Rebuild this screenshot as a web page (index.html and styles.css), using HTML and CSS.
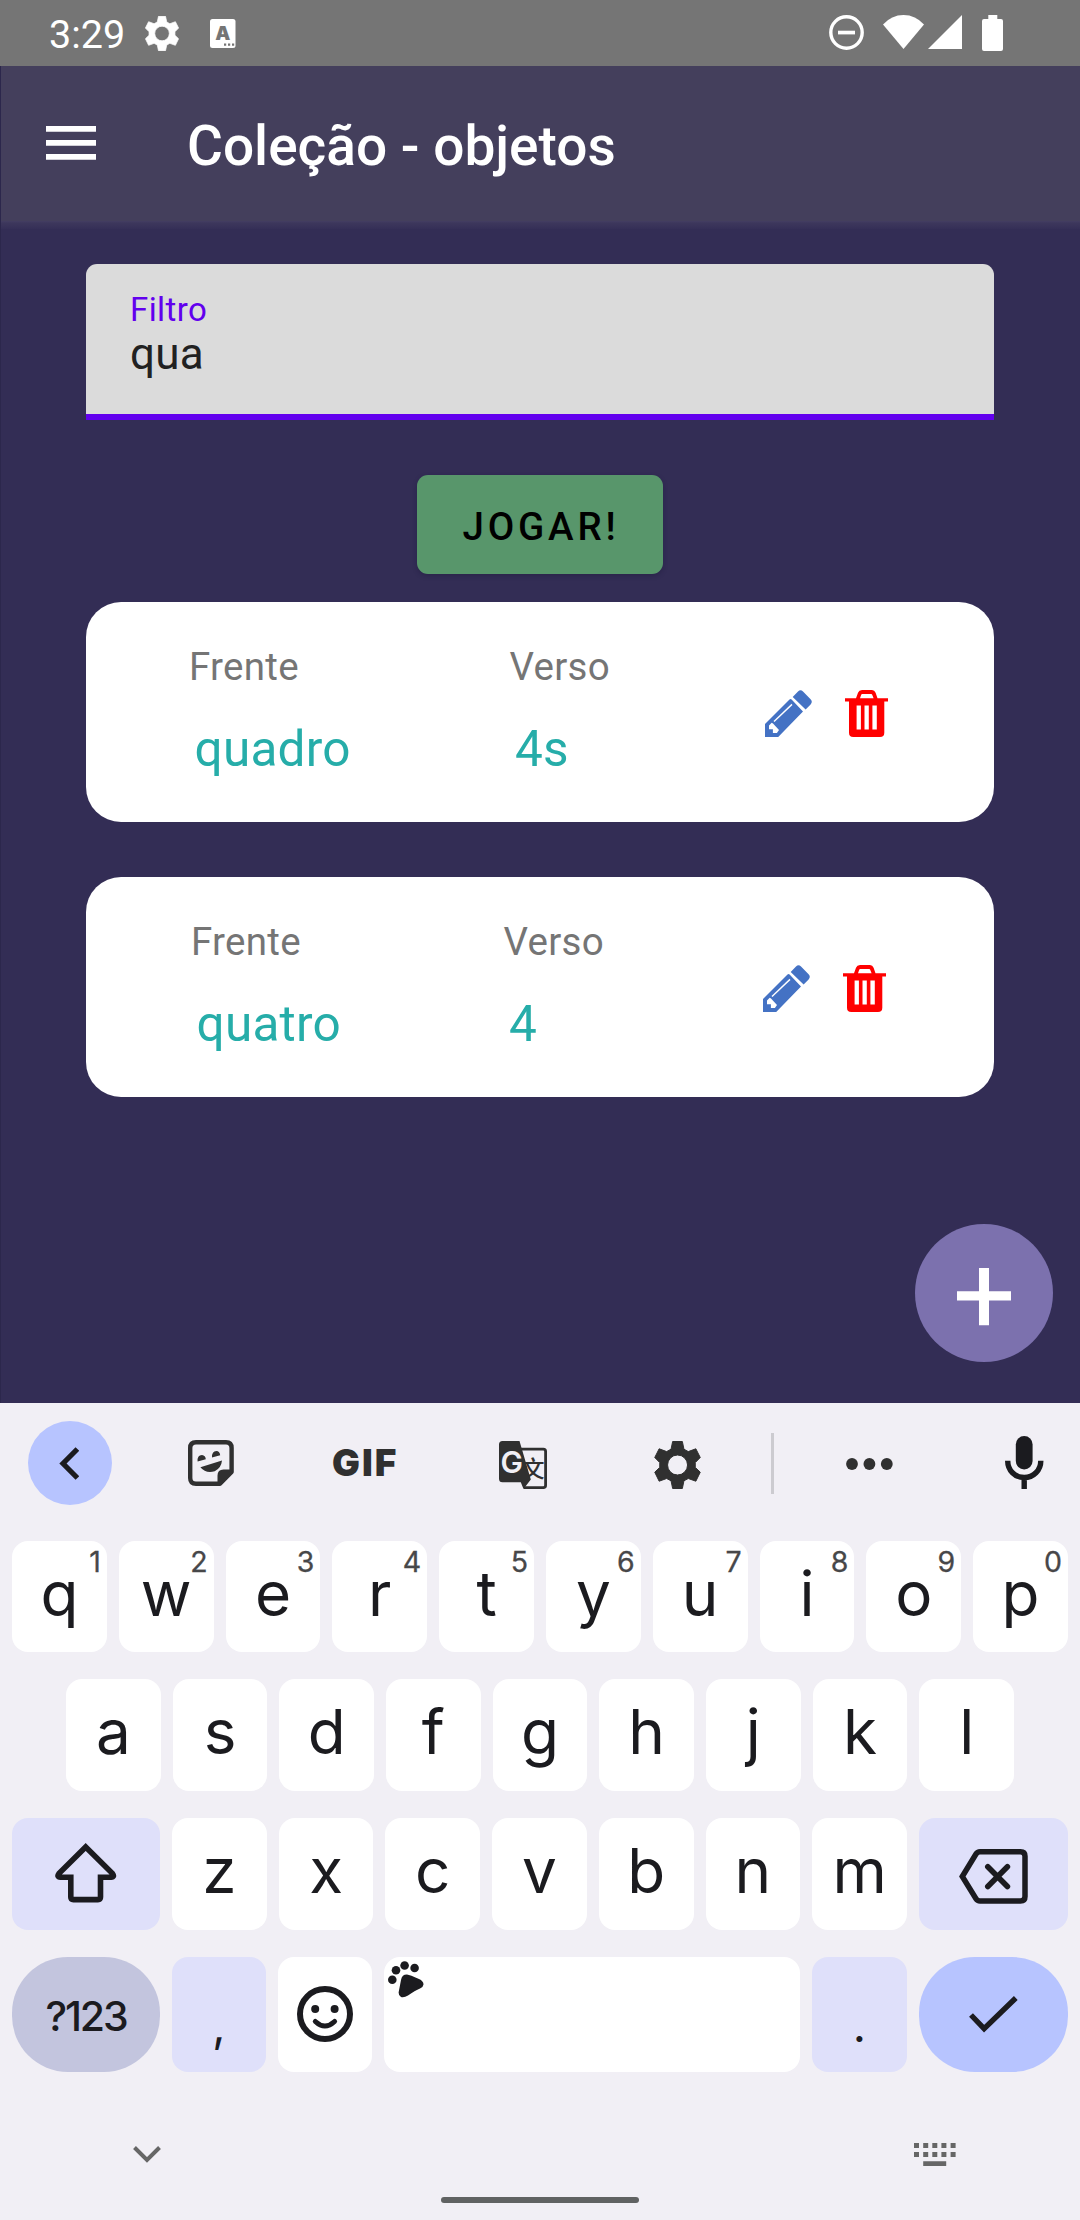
FILE: index.html
```html
<!DOCTYPE html>
<html lang="pt-BR">
<head>
<meta charset="utf-8">
<title>Coleção - objetos</title>
<link rel="stylesheet" href="styles.css">
</head>
<body>
<svg class="defs" aria-hidden="true">
  <symbol id="gear" viewBox="0 0 46.5 48"><path fill-rule="evenodd" stroke="currentColor" stroke-width="1" stroke-linejoin="round" d="M18.4.5H28.1L29.7 8.2 34 10.6 41.6 7.8 46 16.5 41 21.6V26.4L46 31.2 41.6 40.2 34 37.5 29.7 39.8 28.1 47.5H18.4L16.8 39.8 12.4 37.5 4.9 40.2.5 31.2 5.5 26.4V21.6L.5 16.5 4.9 7.8 12.4 10.6 16.8 8.2ZM23.3 14A10 10 0 1 0 23.3 34 10 10 0 1 0 23.3 14Z"/></symbol>
  <symbol id="pencil" viewBox="0 0 47 45.7" preserveAspectRatio="none"><path fill="#4472c4" d="M0 33 24.5 9.2Q25.6 8.2 26.6 9.2L38 21 13.2 45.7H0ZM27.7 6.7 33 1.4Q35.5-.9 38 1.4L45.6 9Q48 11.5 45.6 14L40.6 19Z"/><path fill="#fff" d="M4 34.5 6.7 31.8 8 32.6 14 39 11.9 41.7H7.9V38.2H4Z"/><path stroke="#fff" stroke-width="1.4" d="M9 30.7 27 14"/></symbol>
  <symbol id="trash" viewBox="0 0 43 45.7" preserveAspectRatio="none"><path fill="#f00" fill-rule="evenodd" d="M0 8H11L13 2.6Q14 0 17 0H27Q29.5 0 30.6 2.6L32.5 8H43V11.3H39.3V41.5Q39.3 45.7 35 45.7H8.3Q4 45.7 4 41.5V11.3H0ZM15 8H28.6L27.2 4.6Q26.9 4 26.2 4H17.2Q16.5 4 16.2 4.6ZM11.6 15V38.4H15.9V15ZM19.5 15V38.4H23.8V15ZM27.4 15V38.4H31.8V15Z"/></symbol>
</svg>

<header class="status">
  <span class="clock">3:29</span>
  <svg class="status-gear"><use href="#gear"/></svg>
  <svg class="status-lang" viewBox="0 0 25.5 29"><rect width="25.5" height="29" rx="2.5" fill="#fff"/><text x="12.8" y="21" text-anchor="middle" class="lang-a">A</text><path fill="#757575" d="M14 24.6h2.2v2.2H14zM18 24.6h2.2v2.2H18zM22 24.6h2.2v2.2H22z"/></svg>
  <span class="spacer"></span>
  <svg class="dnd" viewBox="0 0 35 35"><circle cx="17.5" cy="17.5" r="15.7" fill="none" stroke="#fff" stroke-width="3.4"/><path fill="#fff" d="M9 15.7H26V19.4H9Z"/></svg>
  <svg class="wifi" viewBox="0 0 41 34"><path fill="#fff" d="M0 9.5Q8.5 0 20.5 0T41 9.5L20.5 34Z"/></svg>
  <svg class="signal" viewBox="0 0 34 34"><path fill="#fff" d="M0 34 34 0V34Z"/></svg>
  <svg class="battery" viewBox="0 0 21 36"><path fill="#fff" d="M6.3 0H15.3V4H19Q21 4 21 6V34Q21 36 19 36H2Q0 36 0 34V6Q0 4 2 4H6.3Z"/></svg>
</header>

<section class="app">
  <div class="appbar">
    <svg class="menu" viewBox="0 0 50 34"><path fill="#fff" d="M0 0H50V5.7H0ZM0 14H50V19.7H0ZM0 28H50V33.7H0Z"/></svg>
    <h1 class="title">Coleção - objetos</h1>
  </div>
  <main class="content">
    <label class="field">
      <span class="field-label">Filtro</span>
      <span class="field-value">qua</span>
    </label>
    <button class="play" type="button">JOGAR!</button>
    <div class="cards">
      <article class="card card-quadro">
        <div><p class="caption">Frente</p><p class="word">quadro</p></div>
        <div><p class="caption">Verso</p><p class="word">4s</p></div>
        <div class="actions"><svg class="pencil"><use href="#pencil"/></svg><svg class="trash"><use href="#trash"/></svg></div>
      </article>
      <article class="card card-quatro">
        <div><p class="caption">Frente</p><p class="word">quatro</p></div>
        <div><p class="caption">Verso</p><p class="word">4</p></div>
        <div class="actions"><svg class="pencil"><use href="#pencil"/></svg><svg class="trash"><use href="#trash"/></svg></div>
      </article>
    </div>
  </main>
  <button class="fab" type="button" aria-label="Adicionar"><svg class="plus" viewBox="0 0 54 58"><path fill="#fff" d="M22 0H32V23.2H54V32.6H32V57.3H22V32.6H0V23.2H22Z"/></svg></button>
</section>

<section class="keyboard">
  <div class="toolbar">
    <span class="back"><svg class="back-icon" viewBox="0 0 20.4 33"><path fill="none" stroke="#1b1b1f" stroke-width="5.2" d="M18.4 2 4 16.5 18.4 31"/></svg></span>
    <svg class="sticker" viewBox="0 0 46 46"><path fill="none" stroke="#303030" stroke-width="4.4" stroke-linejoin="round" d="M8 2.2H38Q43.6 2.2 43.6 8V32L32 43.7H8Q2.2 43.7 2.2 38V8Q2.2 2.2 8 2.2Z"/><path fill="#303030" d="M45 29.5H35.5Q29.5 29.5 29.5 35.5V45H32L45 32ZM9.6 21.6Q9 15 14 15 17.5 15.6 17.8 19.2ZM24 17.5Q23.7 11.2 28.4 11 31.8 11.3 32.2 15.2ZM12.4 27.2 34 20.5Q33.3 28 26.7 31.2 18 34 12.4 27.2Z"/></svg>
    <span class="gif">GIF</span>
    <svg class="translate" viewBox="0 0 48 48"><path fill="none" stroke="#303030" stroke-width="2.8" d="M20 8.2H44.3Q46.6 8.2 46.6 10.5V44.2Q46.6 46.6 44.3 46.6H25"/><text x="34" y="36" text-anchor="middle" class="wen">文</text><path fill="#303030" d="M3.5 0H20.5L31.8 38.5 24.5 48 21.8 41.2H3.5Q0 41.2 0 37.7V3.5Q0 0 3.5 0Z"/><text x="12.8" y="32" text-anchor="middle" class="g">G</text></svg>
    <svg class="tool-gear"><use href="#gear"/></svg>
    <span class="divider"></span>
    <svg class="dots" viewBox="0 0 47 12"><circle cx="6" cy="6" r="5.9"/><circle cx="23.4" cy="6" r="5.9"/><circle cx="40.8" cy="6" r="5.9"/></svg>
    <svg class="mic" viewBox="0 0 38.5 53"><rect x="10.8" width="16.8" height="33.4" rx="8.4" fill="#1b1b1f"/><path fill="none" stroke="#1b1b1f" stroke-width="5.4" d="M2.7 24.7C2.7 34.5 10 41.5 19.2 41.5S35.8 34.5 35.8 24.7M19.2 41V53"/></svg>
  </div>

  <div class="keys row1">
    <span class="key">q<i>1</i></span><span class="key">w<i>2</i></span><span class="key">e<i>3</i></span><span class="key">r<i>4</i></span><span class="key">t<i>5</i></span><span class="key">y<i>6</i></span><span class="key">u<i>7</i></span><span class="key">i<i>8</i></span><span class="key">o<i>9</i></span><span class="key">p<i>0</i></span>
  </div>
  <div class="keys row2">
    <span class="key">a</span><span class="key">s</span><span class="key">d</span><span class="key">f</span><span class="key">g</span><span class="key">h</span><span class="key">j</span><span class="key">k</span><span class="key">l</span>
  </div>
  <div class="keys row3">
    <span class="key mod"><svg class="shift" viewBox="0 0 61.5 59.5"><path fill="none" stroke="#1b1b1f" stroke-width="5.6" d="M30.7 4 57.5 30.6Q60 34 56 34.2H45.5V54Q45.5 56.6 43 56.6H18.4Q15.8 56.6 15.8 54V34.2H5.5Q1.4 34 3.9 30.6Z"/></svg></span>
    <span class="key">z</span><span class="key">x</span><span class="key">c</span><span class="key">v</span><span class="key">b</span><span class="key">n</span><span class="key">m</span>
    <span class="key mod"><svg class="bksp" viewBox="0 0 69 55"><path fill="none" stroke="#1b1b1f" stroke-width="5.5" d="M3.3 27.5 17 5Q18.4 2.8 21 2.8H61.5Q66 2.8 66 7.3V47.5Q66 52 61.5 52H21Q18.4 52 17 49.8Z"/><path fill="none" stroke="#1b1b1f" stroke-width="5.6" stroke-linecap="round" d="M28.8 17.8 48.4 37.5M48.4 17.8 28.8 37.5"/></svg></span>
  </div>
  <div class="keys row4">
    <span class="key sym">?123</span>
    <span class="key mod punct">,</span>
    <span class="key"><svg class="emoji" viewBox="0 0 56 56"><circle cx="28" cy="28" r="25" fill="none" stroke="#1b1b1f" stroke-width="6"/><circle cx="18.2" cy="23" r="4"/><circle cx="37.6" cy="23" r="4"/><path fill="none" stroke="#1b1b1f" stroke-width="5" stroke-linecap="round" d="M18.3 35.5Q27.9 44.5 37.6 35.5"/></svg></span>
    <span class="key space"><svg class="paw" viewBox="0 0 36 37"><circle cx="4.3" cy="18.7" r="4.3"/><circle cx="8" cy="9.3" r="4.3"/><circle cx="16.6" cy="4.5" r="4.3"/><circle cx="26.6" cy="7" r="4.3"/><path d="M13 19Q14 13.5 19 13.6 22 14 31 18 35.5 20 35.5 23.5 35.3 26 32 27.5 27 29.5 20 34.5 16 37 13 36 10.5 34.5 10.6 31.5Z"/></svg></span>
    <span class="key mod punct">.</span>
    <span class="key enter"><svg class="check" viewBox="0 0 49 37"><path fill="none" stroke="#1b1b1f" stroke-width="5.4" d="M2 19 15.1 32.6 46.8 2"/></svg></span>
  </div>

  <div class="navrow">
    <svg class="down" viewBox="0 0 28 17"><path fill="none" stroke="#666" stroke-width="4" d="M1.5 1.5 14 14 26.5 1.5"/></svg>
    <svg class="ime" viewBox="0 0 42 23"><path fill="#666" d="M0 0h5v5H0zM9.2 0h5v5h-5zM18.3 0h5v5h-5zM27.4 0h5v5h-5zM36.6 0h5v5h-5zM0 9h5v5H0zM9.2 9h5v5h-5zM18.3 9h5v5h-5zM27.4 9h5v5h-5zM36.6 9h5v5h-5zM9.2 18.3H32.2V23H9.2z"/></svg>
  </div>
  <div class="home"></div>
</section>
</body>
</html>
```
FILE: styles.css
```css
* { box-sizing: border-box; margin: 0; padding: 0; }
body { width: 1080px; height: 2220px; overflow: hidden; background: #f1eff5; font-family: Roboto, sans-serif; }
svg { display: block; flex: none; }
button { border: 0; font: inherit; }
.defs { display: none; }

.status { height: 66px; background: #757575; color: #fff; display: flex; align-items: flex-start; padding: 15px 77px 0 49px; }
.clock { font-size: 39.5px; line-height: 40px; width: 96px; }
.status-gear { width: 34px; height: 35px; fill: currentColor; margin-top: 1px; }
.status-lang { width: 25.5px; height: 29px; margin: 4px 0 0 31px; }
.lang-a { font: 900 19px Inter, sans-serif; fill: #757575; }
.spacer { flex: 1; }
.dnd { width: 35px; height: 35px; margin-right: 19px; }
.wifi { width: 41px; height: 34px; margin-right: 4px; }
.signal { width: 34px; height: 34px; margin-right: 20px; }
.battery { width: 21px; height: 36px; }

.app { position: relative; height: 1337px; background: #332d55; border-left: 1px solid #2c274c; }
.appbar { height: 163px; display: flex; align-items: flex-start; padding: 60px 0 0 45px; background: linear-gradient(#443f5c 0, #443f5c 155px, #443e62 155px, #3d375c 157px, #352f57 163px); }
.menu { width: 50px; height: 34px; }
.title { margin: -12px 0 0 91px; font-size: 55px; font-weight: 500; line-height: 64px; color: #fff; }

.content { padding: 35px 86px 0 85px; display: flex; flex-direction: column; align-items: center; }
.field { width: 100%; height: 156px; background: #dbdbdb; border-bottom: 6px solid #6200ee; border-radius: 11px 11px 0 0; padding: 26px 44px 0; display: flex; flex-direction: column; }
.field-label { font-size: 33px; line-height: 40px; letter-spacing: .4px; color: #6200ee; }
.field-value { margin-top: -1px; font-size: 44px; line-height: 50px; letter-spacing: .3px; color: #212121; }
.play { margin-top: 55px; width: 246px; height: 99px; border-radius: 11px; background: #58966b; color: #000; font-weight: 500; font-size: 38.5px; letter-spacing: 3.8px; padding-top: 4px; padding-left: 2px; box-shadow: 0 2px 5px rgba(20, 15, 50, .3); }
.cards { width: 100%; margin-top: 28px; display: flex; flex-direction: column; gap: 55px; }
.card { height: 220px; border-radius: 35px; background: #fff; display: grid; align-items: start; padding-top: 42px; }
.card-quadro { grid-template-columns: 320.5px 255.5px auto; padding-left: 103px; }
.card-quatro { grid-template-columns: 312.5px 259.5px auto; padding-left: 105px; }
.caption { font-size: 38.5px; line-height: 46px; letter-spacing: .3px; color: #757575; }
.word { font-size: 49.5px; line-height: 60px; letter-spacing: .25px; color: #26ada9; margin-top: 29px; padding-left: 5.5px; }
.actions { display: flex; gap: 33px; padding-top: 46px; }
.pencil { width: 47px; height: 47px; }
.trash { width: 43px; height: 47px; }
.fab { position: absolute; left: 914px; top: 1158px; width: 138px; height: 138px; border-radius: 50%; background: #7c71ae; display: flex; justify-content: center; padding-top: 44px; }
.plus { width: 54px; height: 58px; }

.keyboard { height: 817px; background: #f1eff5; }
.toolbar { height: 138px; display: flex; align-items: flex-start; padding: 18px 0 0 28px; }
.back { width: 84px; height: 84px; border-radius: 50%; background: #b7c4ff; padding: 25.5px 0 0 31px; }
.back-icon { width: 20.4px; height: 33px; }
.sticker { width: 46px; height: 46px; margin: 19px 0 0 76px; }
.gif { width: 64px; margin: 19px 0 0 98px; font: 900 37px/45px Inter, sans-serif; letter-spacing: 2px; color: #303030; }
.translate { width: 48px; height: 48px; margin: 20px 0 0 103px; }
.wen { font: 500 23px "Noto Sans CJK SC", sans-serif; fill: #303030; }
.g { font: 600 30px Inter, sans-serif; fill: #f1eff5; }
.tool-gear { width: 47px; height: 48px; margin: 20px 0 0 107px; fill: #303030; color: #303030; }
.divider { width: 3px; height: 61px; margin: 12px 0 0 70px; background: #cccbd0; }
.dots { width: 47px; height: 12px; margin: 37px 0 0 72px; fill: #303030; }
.mic { width: 38.5px; height: 53px; margin: 15px 0 0 112px; }

.keys { display: grid; grid-template-rows: 100%; column-gap: 12px; padding: 0 12px; }
.row1 { grid-template-columns: repeat(10, 1fr); height: 111px; }
.row2 { grid-template-columns: repeat(9, 1fr); height: 112px; margin-top: 27px; padding: 0 66px; }
.row3 { grid-template-columns: 148px repeat(7, 1fr) 149px; height: 112px; margin-top: 27px; }
.row4 { grid-template-columns: 148px 94px 94px 416px 95px 149px; height: 115px; margin-top: 27px; }
.key { position: relative; background: #fff; border-radius: 16px; color: #1b1b1f; font: 400 62px/106px Inter, sans-serif; text-align: center; display: flex; justify-content: center; }
.key svg { fill: #1b1b1f; }
.key i { position: absolute; top: 2px; right: 6px; font: 400 28.5px/38px Inter, sans-serif; color: #474749; -webkit-text-stroke: .3px #474749; }
.mod { background: #dfe0fa; }
.shift { width: 61.5px; height: 59.5px; margin-top: 25px; }
.bksp { width: 69px; height: 55px; margin-top: 31px; }
.sym { border-radius: 56px; background: #c3c5de; font: 500 41px/118px Inter, sans-serif; letter-spacing: -2.2px; }
.punct { font-size: 46px; line-height: 137px; }
.emoji { width: 56px; height: 56px; margin-top: 29px; }
.space { justify-content: flex-start; padding: 4px; }
.paw { width: 36px; height: 37px; }
.enter { border-radius: 56px; background: #b7c4ff; }
.check { width: 49px; height: 37px; margin-top: 39px; }

.navrow { display: flex; justify-content: space-between; align-items: flex-start; padding: 71px 124px 0 133px; height: 125px; }
.down { width: 28px; height: 17px; margin-top: 3px; }
.ime { width: 42px; height: 23px; }
.home { width: 198px; height: 6px; border-radius: 3px; background: #606262; margin: 0 auto; }
```
